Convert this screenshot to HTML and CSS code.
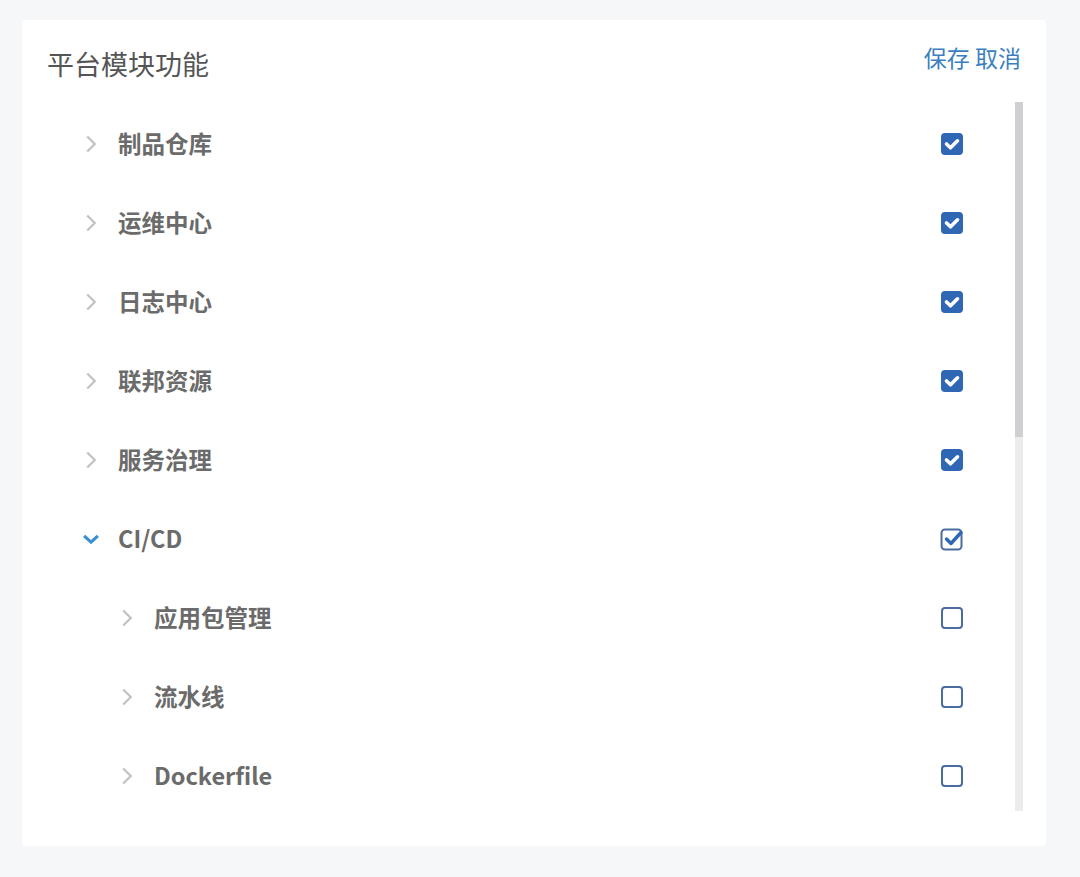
FILE: index.html
```html
<!DOCTYPE html>
<html lang="zh">
<head>
<meta charset="utf-8">
<link rel="stylesheet" href="styles.css">
</head>
<body>
<div class="card">
  <div class="header">
    <div class="title">平台模块功能</div>
    <div class="actions"><span class="link">保存</span> <span class="link">取消</span></div>
  </div>
  <div class="body">
    <ul class="tree">
      <li class="row"><span class="chev"><svg viewBox="0 0 16 16"><path d="M5 2 L11 8 L5 14" /></svg></span><span class="label">制品仓库</span><span class="cb checked"><svg viewBox="0 0 22 22"><path d="M5.5 11 L9.5 14.8 L16.5 7.8" /></svg></span></li>
      <li class="row"><span class="chev"><svg viewBox="0 0 16 16"><path d="M5 2 L11 8 L5 14" /></svg></span><span class="label">运维中心</span><span class="cb checked"><svg viewBox="0 0 22 22"><path d="M5.5 11 L9.5 14.8 L16.5 7.8" /></svg></span></li>
      <li class="row"><span class="chev"><svg viewBox="0 0 16 16"><path d="M5 2 L11 8 L5 14" /></svg></span><span class="label">日志中心</span><span class="cb checked"><svg viewBox="0 0 22 22"><path d="M5.5 11 L9.5 14.8 L16.5 7.8" /></svg></span></li>
      <li class="row"><span class="chev"><svg viewBox="0 0 16 16"><path d="M5 2 L11 8 L5 14" /></svg></span><span class="label">联邦资源</span><span class="cb checked"><svg viewBox="0 0 22 22"><path d="M5.5 11 L9.5 14.8 L16.5 7.8" /></svg></span></li>
      <li class="row"><span class="chev"><svg viewBox="0 0 16 16"><path d="M5 2 L11 8 L5 14" /></svg></span><span class="label">服务治理</span><span class="cb checked"><svg viewBox="0 0 22 22"><path d="M5.5 11 L9.5 14.8 L16.5 7.8" /></svg></span></li>
      <li class="row"><span class="chev open"><svg viewBox="0 0 16 16"><path d="M2.5 5.5 L8 10.5 L13.5 5.5" /></svg></span><span class="label">CI/CD</span><span class="cb partial"><svg viewBox="0 0 24 24"><rect x="1.5" y="2.5" width="20" height="20" rx="3.5" /><path class="mark" d="M6.5 12 L11 16.5 L21 5.5" /></svg></span></li>
      <li class="row child"><span class="chev"><svg viewBox="0 0 16 16"><path d="M5 2 L11 8 L5 14" /></svg></span><span class="label">应用包管理</span><span class="cb"></span></li>
      <li class="row child"><span class="chev"><svg viewBox="0 0 16 16"><path d="M5 2 L11 8 L5 14" /></svg></span><span class="label">流水线</span><span class="cb"></span></li>
      <li class="row child"><span class="chev"><svg viewBox="0 0 16 16"><path d="M5 2 L11 8 L5 14" /></svg></span><span class="label">Dockerfile</span><span class="cb"></span></li>
    </ul>
    <div class="scrollbar"><div class="thumb"></div></div>
  </div>
</div>
</body>
</html>
```

FILE: styles.css
```css
* { box-sizing: border-box; }
html, body { margin: 0; padding: 0; }
body {
  background: #f6f7f9;
  font-family: "Noto Sans CJK SC", "Noto Sans", sans-serif;
  width: 1080px;
  height: 877px;
  padding: 20px 0 0 22px;
}
.card {
  width: 1024px;
  height: 826px;
  background: #ffffff;
  border-radius: 4px;
  display: flex;
  flex-direction: column;
}
.header {
  height: 82px;
  display: flex;
  justify-content: space-between;
  padding: 0 25px;
}
.title {
  font-size: 27px;
  color: #555;
  line-height: 1;
  margin-top: 30px;
}
.actions {
  font-size: 23px;
  color: #3c7fc0;
  line-height: 1;
  margin-top: 26px;
}
.body {
  display: flex;
  height: 709px;
}
.tree {
  list-style: none;
  margin: 0;
  padding: 2px 0 0 58px;
  flex: 1;
}
.row {
  height: 79px;
  display: flex;
  align-items: center;
}
.row.child { padding-left: 36px; }
.chev {
  width: 22px;
  height: 22px;
  display: flex;
  align-items: center;
  justify-content: center;
  margin-right: 16px;
}
.chev svg { width: 20px; height: 20px; fill: none; stroke: #c2c2c2; stroke-width: 1.8; }
.chev.open svg { stroke: #3d8fcf; stroke-width: 2.6; }
.label {
  flex: 1;
  font-size: 23.5px;
  font-weight: 700;
  color: #6b6b6b;
  line-height: 1;
}
.cb {
  width: 22px;
  height: 22px;
  border: 2px solid #4a6c9e;
  border-radius: 4px;
  margin-right: 52px;
  display: flex;
  align-items: center;
  justify-content: center;
}
.cb.checked {
  background: #2f67b4;
  border-color: #2f67b4;
}
.cb.checked svg { width: 22px; height: 22px; flex: none; fill: none; stroke: #fff; stroke-width: 3.6; stroke-linecap: round; stroke-linejoin: round; }
.cb.partial { border: none; }
.cb.partial svg { width: 24px; height: 24px; flex: none; overflow: visible; }
.cb.partial rect { fill: #fff; stroke: #4a6c9e; stroke-width: 2; }
.cb.partial .mark { fill: none; stroke: #2f67b4; stroke-width: 3.4; stroke-linecap: round; stroke-linejoin: round; }
.scrollbar {
  width: 8px;
  height: 709px;
  background: #ececec;
  margin-right: 23px;
}
.thumb {
  height: 335px;
  background: #cfcfd2;
}
```
